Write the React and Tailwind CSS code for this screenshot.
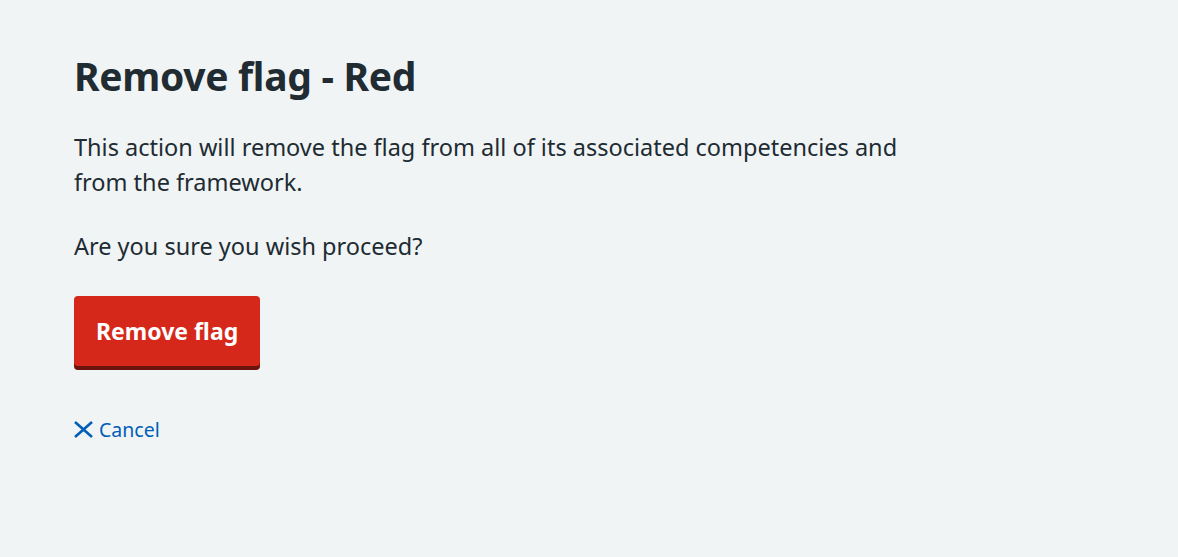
export default function App() {
  return (
    <div className="min-h-screen bg-[#f0f4f5] text-[#212b32]" style={{ fontFamily: '"Noto Sans", "Open Sans", sans-serif' }}>
      <main className="px-[74px] pt-[48px] pb-10">
        <h1 className="text-[39px] font-bold leading-[55px] tracking-[-0.3px]">Remove flag - Red</h1>
        <div className="mt-[27px] max-w-[850px] text-[23.5px] leading-[35px]">
          <p>This action will remove the flag from all of its associated competencies and from the framework.</p>
          <p className="mt-[29px]">Are you sure you wish proceed?</p>
        </div>
        <button
          type="button"
          className="mt-[32px] h-[70px] rounded-[4px] bg-[#d5281b] px-[22px] text-[23px] font-bold text-white shadow-[0_4px_0_#6b140e]"
        >
          Remove flag
        </button>
        <div className="mt-[49px]">
          <a href="#" className="inline-flex items-center gap-[6px] text-[19.5px] text-[#005eb8]">
            <svg width="19" height="17" viewBox="0 0 19 17" fill="none" stroke="currentColor" strokeWidth="2.6">
              <path d="M1 1l17 15M18 1L1 16" />
            </svg>
            Cancel
          </a>
        </div>
      </main>
    </div>
  );
}
